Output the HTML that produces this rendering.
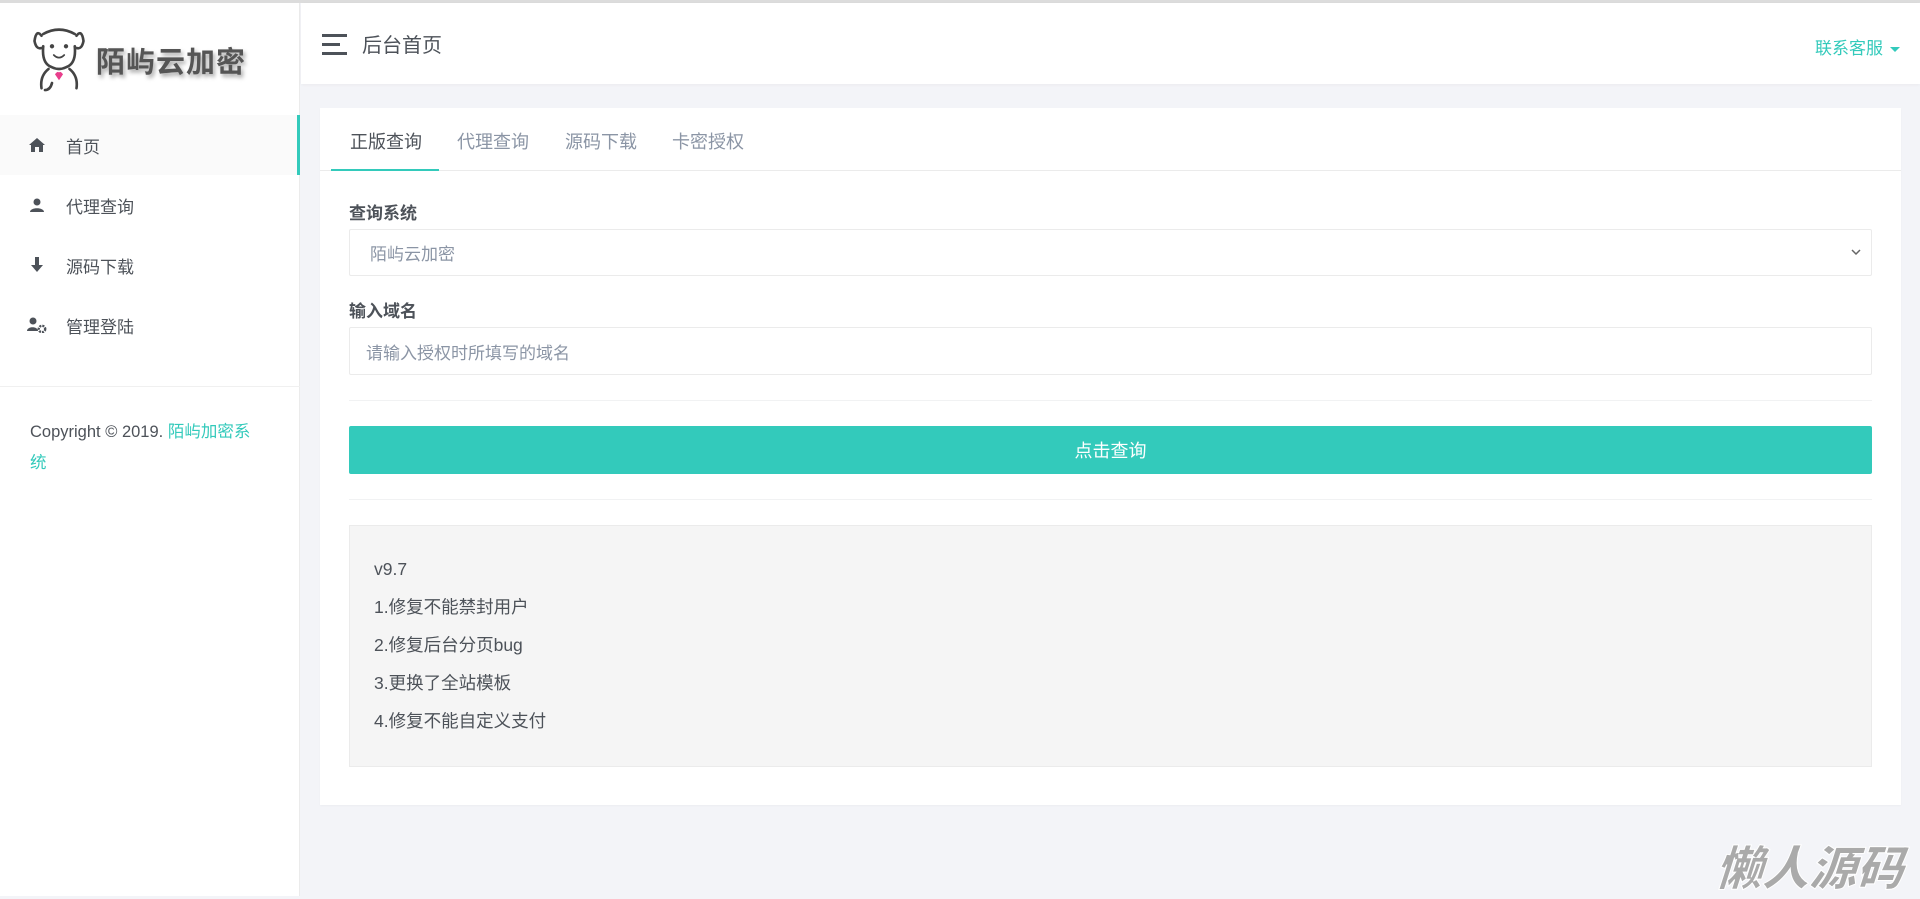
<!DOCTYPE html>
<html><head><meta charset="utf-8"><style>
*{margin:0;padding:0;box-sizing:border-box}
body{width:1920px;height:896px;overflow:hidden;background:#f3f4f8;font-family:"Liberation Sans","Noto Sans CJK SC",sans-serif;color:#4d5259;position:relative}
.topline{position:absolute;left:0;top:0;width:1920px;height:3px;background:#dcdcdc}
.side{position:absolute;left:0;top:3px;width:300px;height:893px;background:#fff;border-right:1px solid #ebebeb}
.logo{height:112px;position:relative}
.menu{position:absolute;top:114px;left:0;width:300px}
.mi{height:60px;display:flex;align-items:center;font-size:17px;color:#4d5259;position:relative;top:-2px}
.mi.act{background:#fafafa;border-right:3px solid #33cabb}
.mi .ic{width:66px;display:flex;justify-content:center;padding-left:8px}
.div{position:absolute;top:383px;left:0;width:300px;height:1px;background:#f0f0f0}
.copy{position:absolute;top:414px;left:30px;width:236px;font-size:16.5px;line-height:31px;color:#4d5259}
.copy b{font-weight:normal;color:#33cabb}
.head{position:absolute;left:301px;top:3px;width:1619px;height:81px;background:#fff;box-shadow:0 1px 3px rgba(0,0,0,.04)}
.ham{position:absolute;left:21px;top:31px}
.ham i{display:block;width:25px;height:3px;background:#4d5259;margin-bottom:6px}
.ham i:nth-child(2){width:18px}
.title{position:absolute;left:61px;top:26px;font-size:20px;color:#4d5259}
.kf{position:absolute;right:20px;top:31px;font-size:17px;color:#33cabb}
.kf:after{content:"";display:inline-block;margin-left:7px;vertical-align:middle;border:5px solid transparent;border-top:5px solid #33cabb;border-bottom:0}
.card{position:absolute;left:320px;top:108px;width:1581px;height:697px;background:#fff;box-shadow:0 1px 2px rgba(0,0,0,.03)}
.tabs{height:63px;border-bottom:1px solid #ebebeb;position:relative}
.tab{position:absolute;top:20px;font-size:18px;color:#8b95a5}
.tab.a{color:#4d5259}
.uline{position:absolute;left:11px;top:61px;width:108px;height:2px;background:#33cabb}
.lbl{position:absolute;left:29px;font-size:17px;font-weight:bold;color:#4d5259}
.inp{position:absolute;left:29px;width:1523px;border:1px solid #ebebeb;border-radius:2px;font-size:17px;color:#8b95a5;padding-left:20px;display:flex;align-items:center}
.hr{position:absolute;left:29px;width:1523px;height:1px;background:#f1f2f3}
.btn{position:absolute;left:29px;top:318px;width:1523px;height:48px;background:#33cabb;border-radius:2px;color:#fff;font-size:18px;display:flex;align-items:center;justify-content:center}
.notes{position:absolute;left:29px;top:417px;width:1523px;height:242px;background:#f5f5f5;border:1px solid #ebebeb;padding:24px 24px;font-size:17.5px;line-height:38px;color:#4d5259}
.wm{position:absolute;left:1716px;top:830px;font-size:47px;font-weight:900;font-style:italic;color:#aaa;-webkit-text-stroke:1px #fff;font-family:"Noto Sans CJK SC",sans-serif;transform:skewX(-4deg)}
</style></head><body>
<div class="topline"></div>
<div class="side">
 <div class="logo">
  <svg width="54" height="70" style="position:absolute;left:32px;top:24px" viewBox="0 0 60 80" fill="none" stroke="#444" stroke-width="3" stroke-linecap="round">
   <path d="M10 10 Q4 2 2 16 Q4 26 10 24 M50 10 Q56 2 58 16 Q56 26 50 24 M12 8 Q30 -2 48 8 M12 22 Q10 42 22 46 M48 22 Q50 42 38 46 M22 46 Q30 50 38 46 M18 48 Q8 56 10 70 M42 48 Q52 56 50 70 M22 64 Q20 72 14 72"/>
   <circle cx="22" cy="22" r="1" fill="#444"/><circle cx="38" cy="22" r="1" fill="#444"/>
   <path d="M24 32 Q30 38 36 32" stroke-width="2"/>
   <path d="M26 54 q4 -5 4 1 q0 -6 4 -1 l-4 6z" fill="#e83e8c" stroke="#e83e8c" stroke-width="1"/>
  </svg>
  <div style="position:absolute;left:96px;top:36px;font-size:29px;font-weight:bold;color:#555;letter-spacing:1px;text-shadow:2px 3px 4px rgba(0,0,0,.35);font-family:'Noto Sans CJK SC',sans-serif">陌屿云加密</div>
 </div>
 <div class="menu">
  <div class="mi act"><div class="ic"><svg width="16" height="14" viewBox="0 0 16 14"><path d="M8 0L0 7h2v7h4V9h4v5h4V7h2z" fill="#4d5259"/></svg></div><span>首页</span></div>
  <div class="mi"><div class="ic"><svg width="14" height="14" viewBox="0 0 14 14"><circle cx="7" cy="4" r="3.5" fill="#4d5259"/><path d="M0 14c0-5 14-5 14 0z" fill="#4d5259"/></svg></div><span>代理查询</span></div>
  <div class="mi"><div class="ic"><svg width="12" height="16" viewBox="0 0 12 16"><path d="M4 0h4v8h4l-6 7-6-7h4z" fill="#4d5259"/></svg></div><span>源码下载</span></div>
  <div class="mi"><div class="ic"><svg width="20" height="16" viewBox="0 0 20 16"><circle cx="6" cy="4" r="3.5" fill="#4d5259"/><path d="M0 14c0-5 11-5 11 0z" fill="#4d5259"/><circle cx="15" cy="12" r="3.2" fill="none" stroke="#4d5259" stroke-width="2.4" stroke-dasharray="2 1"/></svg></div><span>管理登陆</span></div>
 </div>
 <div class="div"></div>
 <div class="copy">Copyright © 2019. <b>陌屿加密系统</b></div>
</div>
<div class="head">
 <div class="ham"><i></i><i></i><i></i></div>
 <div class="title">后台首页</div>
 <div class="kf">联系客服</div>
</div>
<div class="card">
 <div class="tabs">
  <div class="tab a" style="left:30px">正版查询</div>
  <div class="tab" style="left:137px">代理查询</div>
  <div class="tab" style="left:245px">源码下载</div>
  <div class="tab" style="left:352px">卡密授权</div>
  <div class="uline"></div>
 </div>
 <div class="lbl" style="top:91px">查询系统</div>
 <div class="inp" style="top:121px;height:47px">陌屿云加密<svg style="position:absolute;right:10px;top:19px" width="10" height="7" viewBox="0 0 10 7"><path d="M1 1l4 4 4-4" stroke="#666" stroke-width="1.5" fill="none"/></svg></div>
 <div class="lbl" style="top:189px">输入域名</div>
 <div class="inp" style="top:219px;height:48px;padding-left:16px">请输入授权时所填写的域名</div>
 <div class="hr" style="top:292px"></div>
 <div class="btn">点击查询</div>
 <div class="hr" style="top:391px"></div>
 <div class="notes">v9.7<br>1.修复不能禁封用户<br>2.修复后台分页bug<br>3.更换了全站模板<br>4.修复不能自定义支付</div>
</div>
<div class="wm">懒人源码</div>
</body></html>
